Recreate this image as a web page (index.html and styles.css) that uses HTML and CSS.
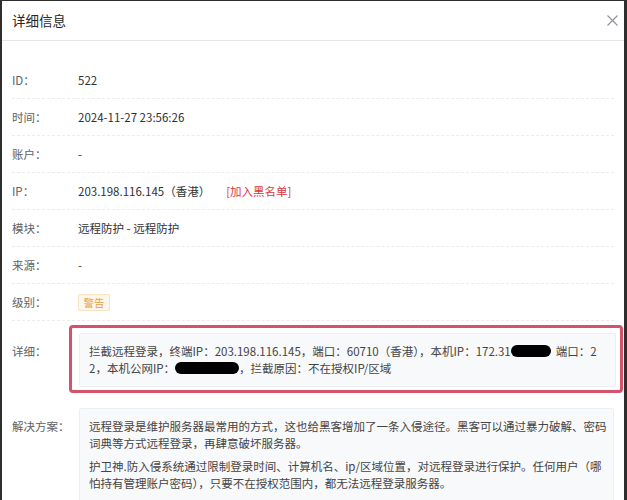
FILE: index.html
```html
<!DOCTYPE html>
<html lang="zh-CN">
<head>
<meta charset="utf-8">
<title>详细信息</title>
<link rel="stylesheet" href="styles.css">
</head>
<body>
<div class="modal">
  <div class="modal-header">
    <span class="modal-title">详细信息</span>
    <span class="close" aria-label="关闭">
      <svg width="11" height="11" viewBox="0 0 11 11"><path d="M0.5 0.5L10.5 10.5M10.5 0.5L0.5 10.5" stroke="#8e9196" stroke-width="1.1" fill="none"/></svg>
    </span>
  </div>
  <div class="modal-body">
    <div class="row"><span class="label">ID：</span><span class="value">522</span></div>
    <div class="row"><span class="label">时间：</span><span class="value">2024-11-27 23:56:26</span></div>
    <div class="row"><span class="label">账户：</span><span class="value">-</span></div>
    <div class="row"><span class="label">IP：</span><span class="value">203.198.116.145（香港）<a class="blacklist">[加入黑名单]</a></span></div>
    <div class="row"><span class="label">模块：</span><span class="value">远程防护 - 远程防护</span></div>
    <div class="row"><span class="label">来源：</span><span class="value">-</span></div>
    <div class="row"><span class="label">级别：</span><span class="value"><span class="badge">警告</span></span></div>
    <div class="block-row detail-row">
      <span class="label block-label">详细：</span>
      <div class="box detail-box">
        <div class="line">拦截远程登录，终端IP：203.198.116.145，端口：60710（香港），本机IP：172.31<span class="redact r1"></span><span class="tail">端口：2</span></div>
        <div class="line">2，本机公网IP：<span class="redact r2"></span><span>，拦截原因：不在授权IP/区域</span></div>
        <span class="highlight"></span>
      </div>
    </div>
    <div class="block-row solution-row">
      <span class="label block-label">解决方案：</span>
      <div class="box solution-box">
        <p>远程登录是维护服务器最常用的方式，这也给黑客增加了一条入侵途径。黑客可以通过暴力破解、密码词典等方式远程登录，再肆意破坏服务器。</p>
        <p>护卫神.防入侵系统通过限制登录时间、计算机名、ip/区域位置，对远程登录进行保护。任何用户（哪怕持有管理账户密码），只要不在授权范围内，都无法远程登录服务器。</p>
      </div>
    </div>
  </div>
</div>
</body>
</html>
```
FILE: styles.css
```css
* { box-sizing: border-box; }
html, body { margin: 0; padding: 0; }
body {
  background: #2e2e2e;
  height: 500px;
  overflow: hidden;
  font-family: "Noto Sans CJK SC", "Noto Sans", sans-serif;
}
.modal {
  background: #fff;
  margin: 1px 3px 0 2px;
  height: 499px;
  overflow: hidden;
}
.modal-header {
  height: 40px;
  border-bottom: 1px solid #e6e6e6;
  display: flex;
  align-items: center;
  justify-content: space-between;
  padding: 0 6px 0 10px;
}
.modal-title {
  font-size: 13.5px;
  color: #262626;
  line-height: 1;
}
.close { display: flex; align-items: center; }
.modal-body {
  padding: 21px 10px 0 10px;
}
.row {
  display: flex;
  align-items: center;
  height: 37px;
  border-bottom: 1px dashed #ececec;
  font-size: 11.5px;
}
.label {
  width: 66px;
  flex: none;
  color: #606266;
  font-size: 11.5px;
}
.value { color: #303133; display: flex; align-items: center; }
.blacklist {
  color: #d9363e;
  margin-left: 16px;
}
.badge {
  display: inline-flex;
  align-items: center;
  justify-content: center;
  width: 32px;
  height: 17px;
  background: #fdf6ec;
  border: 1px solid #f8e3c3;
  color: #e6a23c;
  font-size: 10.5px;
  border-radius: 2px;
}
.block-row {
  display: flex;
  align-items: flex-start;
}
.detail-row { margin-top: 12px; }
.solution-row { margin-top: 21px; }
.block-label {
  line-height: 17px;
  padding-top: 10px;
}
.box {
  flex: 1;
  margin-left: 1px;
  background: #f8f9fb;
  border: 1px solid #ebeef5;
  border-radius: 2px;
  padding: 9px 9px;
  font-size: 11.5px;
  line-height: 17px;
  color: #444;
}
.detail-box {
  position: relative;
  margin-right: -2px;
}
.line { white-space: nowrap; }
.tail { margin-left: 5px; }
.solution-box p { margin: 0; }
.solution-box p + p { margin-top: 6px; }
.solution-box { min-height: 110px; padding-right: 3px; }
.redact {
  display: inline-block;
  background: #000;
  height: 12px;
  vertical-align: -1px;
  border-radius: 6px;
}
.r1 { width: 40px; }
.r2 { width: 64px; }
.highlight {
  position: absolute;
  left: -11px;
  right: -8px;
  top: -9px;
  bottom: -7px;
  border: 3px solid #d5536a;
  border-radius: 4px;
  pointer-events: none;
}
```
